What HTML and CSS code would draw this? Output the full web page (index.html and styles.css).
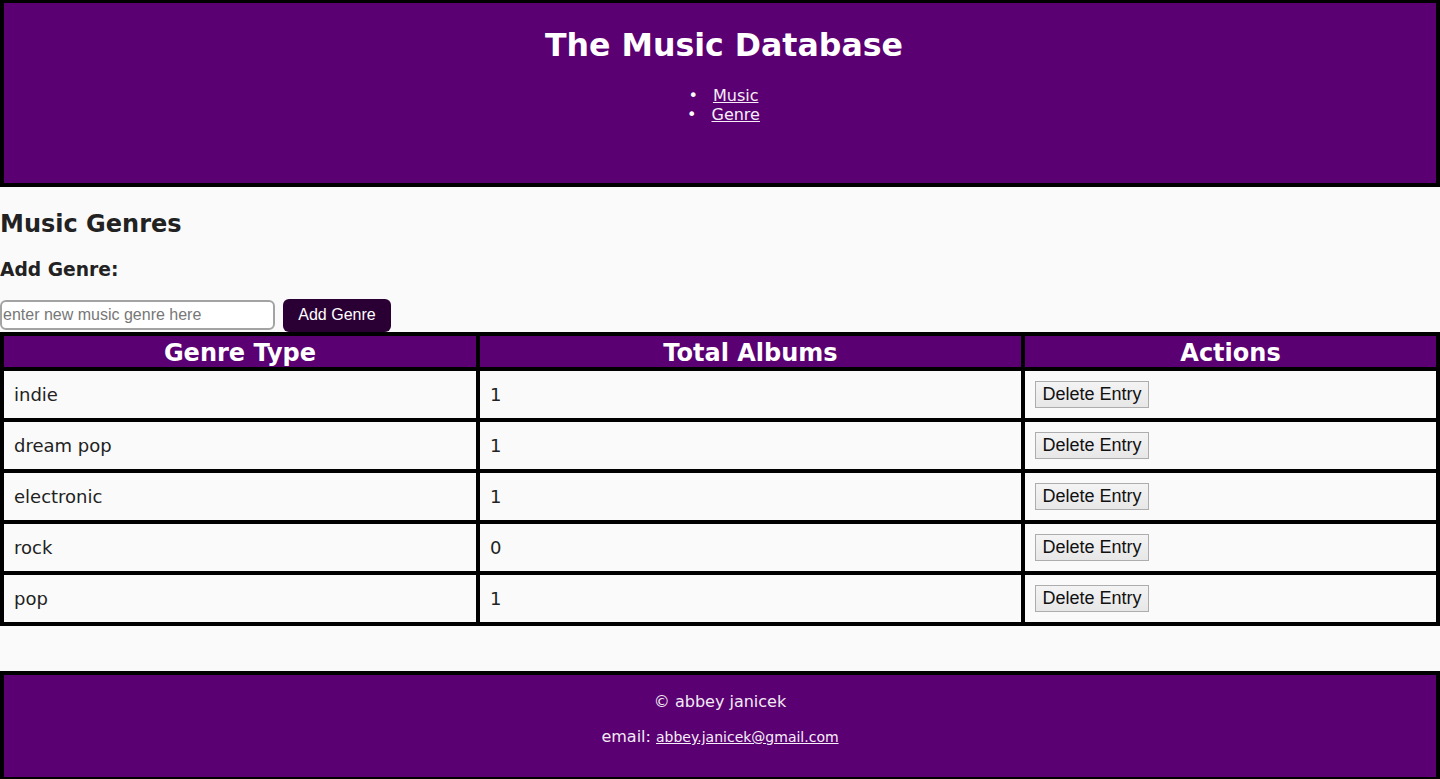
FILE: index.html
```html
<!DOCTYPE html>
<html lang="en">
<head>
<meta charset="utf-8">
<title>The Music Database - Genres</title>
<link rel="stylesheet" href="styles.css">
</head>
<body>
<header class="site-header">
  <h1 class="site-title">The Music Database</h1>
  <ul class="nav">
    <li class="nav-item"><a href="#">Music</a></li>
    <li class="nav-item"><a href="#">Genre</a></li>
  </ul>
</header>
<main class="content">
  <h2 class="page-title">Music Genres</h2>
  <h3 class="form-title">Add Genre:</h3>
  <form class="add-form">
    <input class="genre-input" type="text" placeholder="enter new music genre here">
    <button class="add-btn" type="button">Add Genre</button>
  </form>
  <table class="genre-table">
    <colgroup>
      <col class="col-genre">
      <col class="col-total">
      <col class="col-actions">
    </colgroup>
    <thead>
      <tr><th>Genre Type</th><th>Total Albums</th><th>Actions</th></tr>
    </thead>
    <tbody>
      <tr><td>indie</td><td>1</td><td><button class="del-btn" type="button">Delete Entry</button></td></tr>
      <tr><td>dream pop</td><td>1</td><td><button class="del-btn" type="button">Delete Entry</button></td></tr>
      <tr><td>electronic</td><td>1</td><td><button class="del-btn" type="button">Delete Entry</button></td></tr>
      <tr><td>rock</td><td>0</td><td><button class="del-btn" type="button">Delete Entry</button></td></tr>
      <tr><td>pop</td><td>1</td><td><button class="del-btn" type="button">Delete Entry</button></td></tr>
    </tbody>
  </table>
</main>
<footer class="site-footer">
  <p class="foot-line">© abbey janicek</p>
  <p class="foot-line">email: <a class="foot-link" href="#">abbey.janicek@gmail.com</a></p>
</footer>
</body>
</html>
```

FILE: styles.css
```css
html, body {
  margin: 0;
  padding: 0;
  background: #fafafa;
}
body {
  font-family: "DejaVu Sans", Verdana, sans-serif;
  color: #222;
}
.site-header {
  background: #5b0072;
  border: 4px solid #000;
  border-top-width: 3px;
  box-sizing: border-box;
  height: 187px;
  color: #fff;
  text-align: center;
  padding-top: 24px;
}
.site-title {
  margin: 0;
  padding-left: 8px;
  font-size: 31.6px;
  line-height: 36px;
  font-weight: bold;
}
.nav {
  list-style: none;
  margin: 23px 0 0;
  padding: 0 0 0 7px;
}
.nav-item {
  font-size: 16px;
  line-height: 19px;
}
.nav-item::before {
  content: "•";
  margin-right: 15px;
}
.nav-item a, .site-footer a {
  color: #f6eef8;
  text-decoration: underline;
}
.content {
  padding: 0;
}
.page-title {
  margin: 22px 0 0;
  font-size: 24px;
  line-height: 30px;
}
.form-title {
  margin: 20px 0 0;
  font-size: 18.72px;
  line-height: 22px;
}
.add-form {
  display: flex;
  align-items: center;
  gap: 8px;
  margin: 17px 0 0;
  height: 34px;
}
.genre-input {
  box-sizing: border-box;
  width: 275px;
  height: 30px;
  margin: 0;
  border: 2px solid #a3a3a3;
  border-radius: 6px;
  padding: 0 1px;
  font-family: "Liberation Sans", Arial, sans-serif;
  font-size: 16px;
  background: #fff;
  color: #222;
}
.genre-input::placeholder {
  color: #777;
}
.add-btn {
  box-sizing: border-box;
  width: 108px;
  height: 33px;
  border: none;
  border-radius: 6px;
  background: #2a0034;
  color: #fff;
  font-family: "Liberation Sans", Arial, sans-serif;
  font-size: 16px;
  padding: 0;
}
.genre-table {
  border-collapse: collapse;
  table-layout: fixed;
  width: 1440px;
  border: 4px solid #000;
}
.col-genre { width: 476px; }
.col-total { width: 545px; }
.col-actions { width: 415px; }
.genre-table th {
  background: #5b0072;
  color: #fff;
  font-size: 24px;
  line-height: 28px;
  padding: 3px 0 0;
  border: 4px solid #000;
  font-weight: bold;
}
.genre-table td {
  border: 4px solid #000;
  padding: 10px;
  font-size: 18px;
  line-height: 27px;
  color: #222;
  text-align: left;
  vertical-align: middle;
}
.del-btn {
  box-sizing: border-box;
  height: 27px;
  width: 114px;
  padding: 0;
  border: 1px solid #adadad;
  border-radius: 0;
  background: linear-gradient(#f4f4f4, #e7e7e7);
  color: #111;
  font-family: "Liberation Sans", Arial, sans-serif;
  font-size: 18px;
  display: block;
}
.site-footer {
  margin-top: 45px;
  background: #5b0072;
  border: 4px solid #000;
  color: #f2eaf4;
  text-align: center;
  padding: 1px 0 14px;
  font-size: 16px;
}
.foot-line {
  margin: 16px 0;
  line-height: 19px;
}
.foot-link {
  font-size: 14px;
}
```
